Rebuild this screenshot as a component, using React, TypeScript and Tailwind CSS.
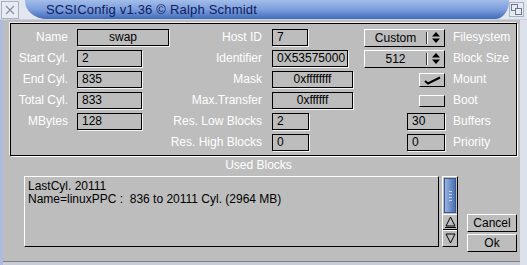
const font = { fontFamily: '"Liberation Sans", Arial, sans-serif' };

function Field({ value, w, center }: { value: string; w: number; center?: boolean }) {
  return (
    <div
      style={{ width: w }}
      className={`h-[17px] border border-black shadow-[1px_1px_0_#f4f4f4] text-[12px] leading-[15px] px-[4px] text-black ${center ? "text-center" : ""}`}
    >
      {value}
    </div>
  );
}

function Cycle({ value }: { value: string }) {
  return (
    <div className="flex h-[18px] w-[82px] border border-t-white border-l-white border-b-black border-r-black text-[12px] leading-[16px] text-black">
      <div className="flex-1 text-center">{value}</div>
      <div className="my-[2px] w-[2px] border-l border-l-[#333] border-r border-r-white" />
      <div className="flex w-[16px] items-center justify-center">
        <svg width="8" height="11" viewBox="0 0 8 11">
          <path d="M4 0 L8 4.5 L0 4.5 Z M0 6.5 L8 6.5 L4 11 Z" fill="#000" />
        </svg>
      </div>
    </div>
  );
}

function Check({ checked, h }: { checked?: boolean; h: number }) {
  return (
    <div
      style={{ height: h }}
      className="w-[26px] border border-t-white border-l-white border-b-black border-r-black flex items-center justify-center"
    >
      {checked && (
        <svg width="20" height="10" viewBox="0 0 20 10">
          <path d="M3 6 L6 8.5 L18 2.5" stroke="#000" strokeWidth="2" fill="none" />
        </svg>
      )}
    </div>
  );
}

function Label({ text, w, right }: { text: string; w: number; right?: boolean }) {
  return (
    <div style={{ width: w }} className={`text-[12px] text-white leading-[17px] whitespace-nowrap ${right ? "text-right" : ""}`}>
      {text}
    </div>
  );
}

const rows = [
  { l1: "Name", f1: <Field value="swap" w={92} center />, l2: "Host ID", f2: <Field value="7" w={36} />, right: <Cycle value="Custom" />, l3: "Filesystem" },
  { l1: "Start Cyl.", f1: <Field value="2" w={65} />, l2: "Identifier", f2: <Field value="0X53575000" w={76} />, right: <Cycle value="512" />, l3: "Block Size" },
  { l1: "End Cyl.", f1: <Field value="835" w={65} />, l2: "Mask", f2: <Field value="0xffffffff" w={81} center />, right: <Check checked h={14} />, l3: "Mount" },
  { l1: "Total Cyl.", f1: <Field value="833" w={65} />, l2: "Max.Transfer", f2: <Field value="0xffffff" w={81} center />, right: <Check h={12} />, l3: "Boot" },
  { l1: "MBytes", f1: <Field value="128" w={65} />, l2: "Res. Low Blocks", f2: <Field value="2" w={37} />, right: <Field value="30" w={38} />, l3: "Buffers" },
  { l1: "", f1: null, l2: "Res. High Blocks", f2: <Field value="0" w={37} />, right: <Field value="0" w={38} />, l3: "Priority" },
];

export default function App() {
  return (
    <div style={font} className="w-[527px] h-[265px] overflow-hidden bg-[#bdbdbd] flex flex-col">
      {/* title bar */}
      <div className="h-[20px] flex bg-[#e2e6ef] border-b border-b-[#c9cfdc]">
        <div className="w-[18px] h-[18px] mt-[1px] ml-[1px] border border-[#a9b1c4] bg-[#e8ebf2] flex items-center justify-center">
          <svg width="10" height="10" viewBox="0 0 10 10">
            <path d="M1 1 L9 9 M9 1 L1 9" stroke="#8a93a8" strokeWidth="1.3" />
          </svg>
        </div>
        <div className="ml-[6px] w-[484px] h-[19px] rounded-bl-[22px_18px] rounded-br-[14px_18px] bg-gradient-to-b from-[#a3bde9] via-[#7c9edc] to-[#426ab8] text-[13px] leading-[19px] text-[#0d1c5e] pl-[21px] tracking-[0.2px]">
          SCSIConfig v1.36 © Ralph Schmidt
        </div>
        <div className="ml-auto mr-[3px] mt-[2px] w-[15px] h-[15px] border border-[#a9b1c4] bg-[#e8ebf2] flex items-center justify-center">
          <svg width="11" height="11" viewBox="0 0 11 11">
            <rect x="0.5" y="0.5" width="6" height="6" fill="none" stroke="#6d7690" />
            <rect x="4.5" y="4.5" width="6" height="6" fill="#e8ebf2" stroke="#6d7690" />
          </svg>
        </div>
      </div>

      {/* body */}
      <div className="flex-1 flex flex-col border-l-[3px] border-l-[#aebbe0] border-r-[7px] border-r-[#dde1ec]">
        <div className="mt-[3px] ml-[7px] w-[507px] h-[133px] border border-black shadow-[1px_1px_0_#fff,-1px_-1px_0_#ececec] pt-[5px] flex flex-col gap-[4px]">
          {rows.map((r, i) => (
            <div key={i} className="flex h-[17px] items-center">
              <Label text={r.l1} w={57} right />
              <div className="w-[9px]" />
              <div className="w-[93px]">{r.f1}</div>
              <Label text={r.l2} w={92} right />
              <div className="w-[10px]" />
              <div className="w-[92px]">{r.f2}</div>
              <div className="w-[81px] flex justify-end">{r.right}</div>
              <div className="w-[8px]" />
              <Label text={r.l3} w={60} />
            </div>
          ))}
        </div>

        <div className="mt-[2px] text-center text-[12px] leading-[14px] text-white pr-[6px]">Used Blocks</div>

        <div className="flex mt-[4px] ml-[21px]">
          <div className="w-[415px] h-[71px] border border-t-white border-l-white border-b-black border-r-black text-[12px] leading-[13px] text-black px-[3px] pt-[3px] whitespace-pre">
            <div>LastCyl. 20111</div>
            <div>Name=linuxPPC :  836 to 20111 Cyl. (2964 MB)</div>
          </div>
          <div className="ml-[3px] w-[16px] h-[71px] flex flex-col border border-t-white border-l-white border-b-black border-r-black">
            <div className="mx-[1px] mt-[1px] h-[35px] bg-gradient-to-r from-[#9ab4e0] via-[#6f92cc] to-[#4c70b0] border border-[#3a5a94] flex flex-col items-center justify-center gap-[2px]">
              <div className="w-[3px] h-[1px] bg-[#c5d4ee]" />
              <div className="w-[3px] h-[1px] bg-[#c5d4ee]" />
              <div className="w-[3px] h-[1px] bg-[#c5d4ee]" />
              <div className="w-[3px] h-[1px] bg-[#c5d4ee]" />
            </div>
            <div className="mt-auto h-[16px] border-t border-t-white border-b border-b-black flex items-center justify-center">
              <svg width="11" height="12" viewBox="0 0 11 12">
                <path d="M5.5 1 L10 10 L1 10 Z" fill="none" stroke="#000" />
                <path d="M0 11.5 L11 11.5" stroke="#000" />
              </svg>
            </div>
            <div className="h-[16px] border-t border-t-white flex items-center justify-center">
              <svg width="11" height="11" viewBox="0 0 11 11">
                <path d="M1 1 L10 1 L5.5 10 Z" fill="none" stroke="#000" />
              </svg>
            </div>
          </div>
          <div className="ml-[9px] mt-[38px] flex flex-col gap-[2px]">
            <div className="w-[50px] h-[18px] border border-t-white border-l-white border-b-black border-r-black text-[12px] leading-[16px] text-center text-black">Cancel</div>
            <div className="w-[50px] h-[18px] border border-t-white border-l-white border-b-black border-r-black text-[12px] leading-[16px] text-center text-black">Ok</div>
          </div>
        </div>

        <div className="mt-auto h-[4px] border-t border-t-[#7d7d7d] bg-[#c8ccd6]" />
      </div>
    </div>
  );
}
